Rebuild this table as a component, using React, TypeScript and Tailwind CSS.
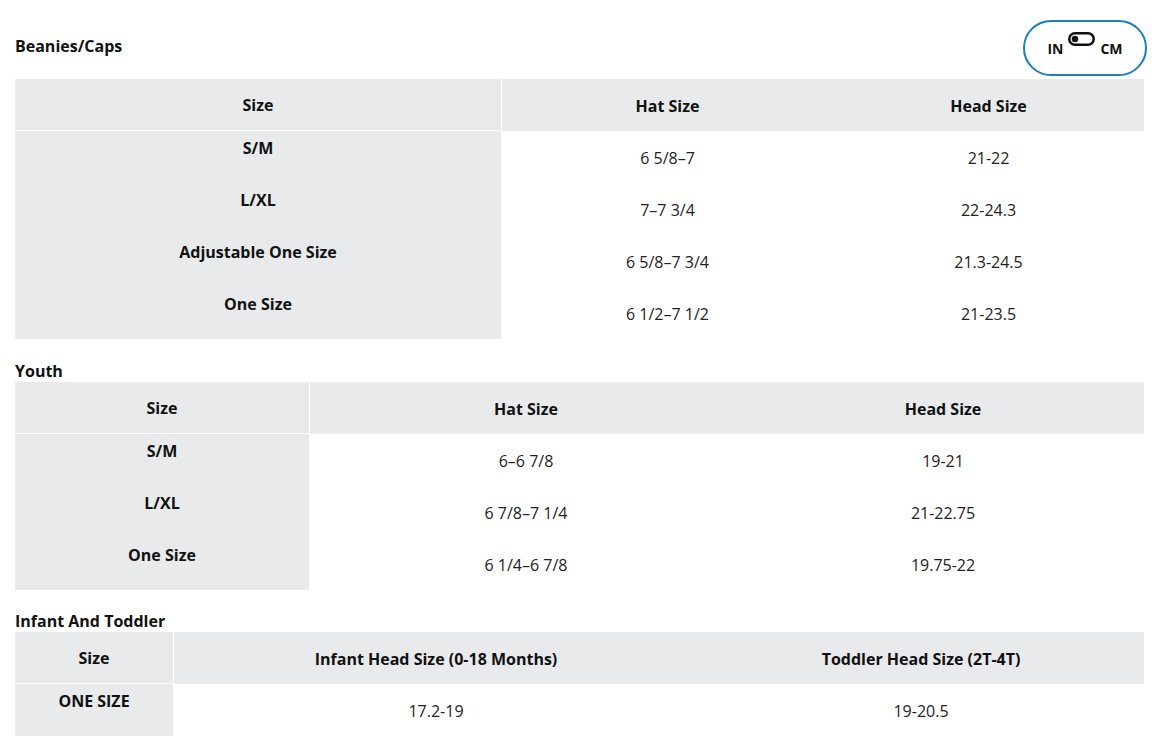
import React from "react";

type Table = {
  widths: string;
  headers: string[];
  rows: string[][];
};

const font = { fontFamily: '"Open Sans", "Noto Sans", sans-serif' };

function SizeTable({ t }: { t: Table }) {
  return (
    <div className={`grid ${t.widths} text-[16px] text-[#111]`}>
      {t.headers.map((h, i) => (
        <div
          key={h}
          className={`h-[52px] flex items-center justify-center bg-[#e9eaec] font-bold pt-[1px] ${
            i === 0 ? "border-r border-b border-white" : ""
          }`}
        >
          {h}
        </div>
      ))}
      {t.rows.map((r, ri) =>
        r.map((c, ci) =>
          ci === 0 ? (
            <div
              key={`${ri}-${ci}`}
              className="h-[52px] bg-[#e9eaec] border-r border-white font-bold text-center pt-[5px] leading-6"
            >
              {c}
            </div>
          ) : (
            <div key={`${ri}-${ci}`} className="h-[52px] flex items-center justify-center text-[#222] pt-[1px]">
              {c}
            </div>
          )
        )
      )}
    </div>
  );
}

const beanies: Table = {
  widths: "grid-cols-[487px_331px_311px]",
  headers: ["Size", "Hat Size", "Head Size"],
  rows: [
    ["S/M", "6 5/8–7", "21-22"],
    ["L/XL", "7–7 3/4", "22-24.3"],
    ["Adjustable One Size", "6 5/8–7 3/4", "21.3-24.5"],
    ["One Size", "6 1/2–7 1/2", "21-23.5"],
  ],
};

const youth: Table = {
  widths: "grid-cols-[295px_432px_402px]",
  headers: ["Size", "Hat Size", "Head Size"],
  rows: [
    ["S/M", "6–6 7/8", "19-21"],
    ["L/XL", "6 7/8–7 1/4", "21-22.75"],
    ["One Size", "6 1/4–6 7/8", "19.75-22"],
  ],
};

const infant: Table = {
  widths: "grid-cols-[159px_524px_446px]",
  headers: ["Size", "Infant Head Size (0-18 Months)", "Toddler Head Size (2T-4T)"],
  rows: [["ONE SIZE", "17.2-19", "19-20.5"]],
};

export default function App() {
  return (
    <div className="w-[1153px] h-[746px] overflow-hidden bg-white pl-[15px] pr-[9px]" style={font}>
      <div className="flex items-center justify-between pt-[20px] -mr-[3px]">
        <div className="font-bold text-[16px] text-[#111] -mt-[4px]">Beanies/Caps</div>
        <button className="h-[56px] w-[124px] shrink-0 rounded-full border-2 border-[#1b7ec2] flex items-center justify-center gap-[5px] font-bold text-[14px] text-[#111]">
          <span>IN</span>
          <svg width="27" height="14" viewBox="0 0 27 14" className="-mt-[18px]">
            <rect x="1.25" y="1.25" width="24.5" height="11.5" rx="5.75" fill="none" stroke="#111" strokeWidth="2.5" />
            <circle cx="7" cy="7" r="3.3" fill="#111" />
          </svg>
          <span>CM</span>
        </button>
      </div>
      <div className="mt-[3px]">
        <SizeTable t={beanies} />
      </div>
      <div className="mt-[20px] h-[23px] leading-[23px] pt-[1px] font-bold text-[16px] text-[#111]">Youth</div>
      <SizeTable t={youth} />
      <div className="mt-[19px] h-[23px] leading-[23px] pt-[1px] font-bold text-[16px] text-[#111]">Infant And Toddler</div>
      <SizeTable t={infant} />
    </div>
  );
}
